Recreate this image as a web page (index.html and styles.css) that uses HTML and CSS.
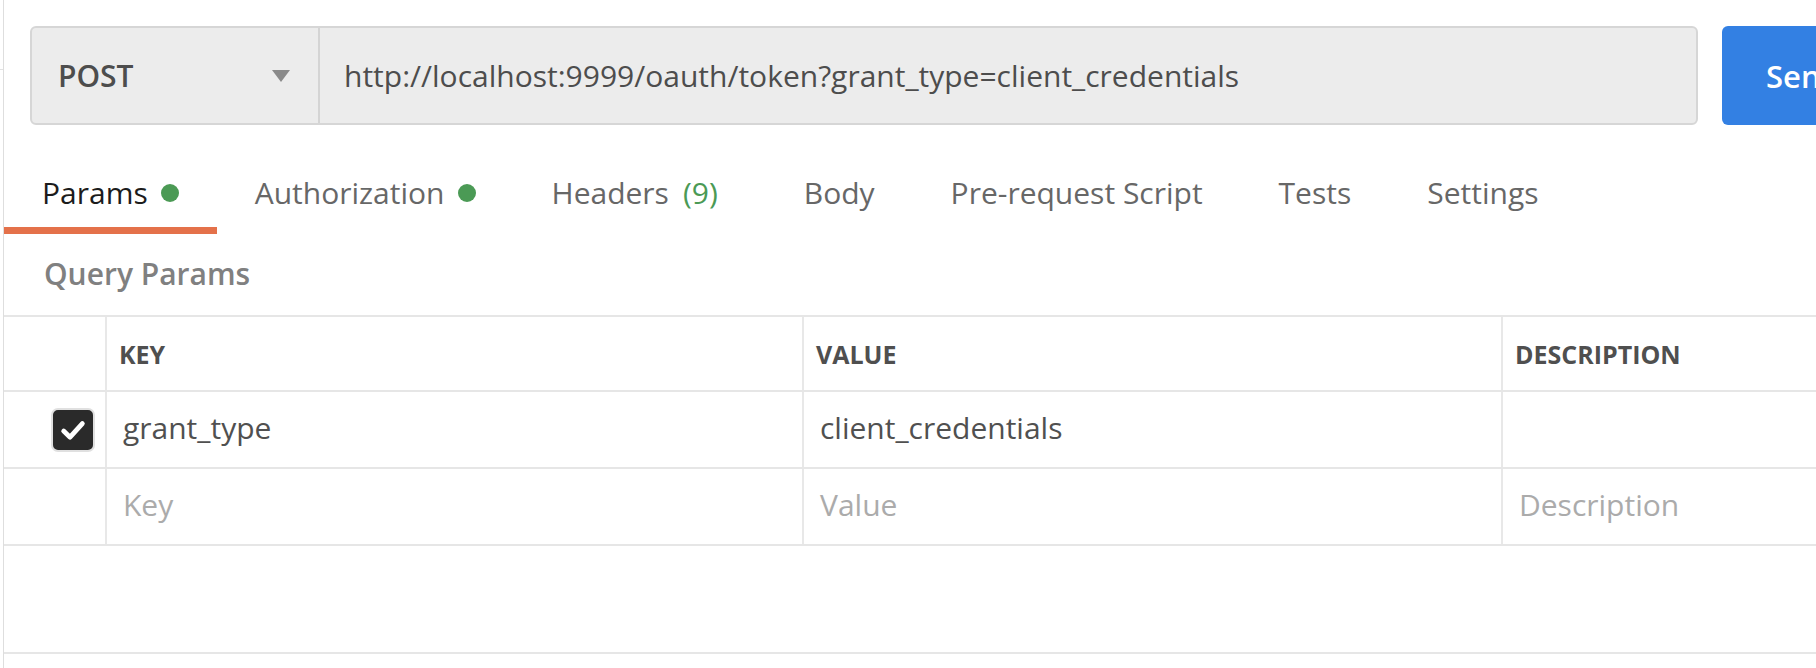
FILE: index.html
```html
<!DOCTYPE html>
<html lang="en">
<head>
<meta charset="utf-8">
<title>POST request</title>
<link rel="stylesheet" href="styles.css">
</head>
<body>
<div class="app">
  <div class="sidebar"><div class="sidebar-line"></div></div>
  <main class="main">
    <div class="request-bar">
      <div class="url-box">
        <div class="method">
          <span class="method-name">POST</span>
          <span class="caret"></span>
        </div>
        <div class="url">http://localhost:9999/oauth/token?grant_type=client_credentials</div>
      </div>
      <button class="send">Send</button>
    </div>

    <nav class="tabs">
      <div class="tab active">Params<span class="dot"></span></div>
      <div class="tab">Authorization<span class="dot"></span></div>
      <div class="tab">Headers<span class="count">(9)</span></div>
      <div class="tab">Body</div>
      <div class="tab">Pre-request Script</div>
      <div class="tab">Tests</div>
      <div class="tab">Settings</div>
    </nav>

    <div class="section-title">Query Params</div>

    <div class="table">
      <div class="row head">
        <div class="cell check-cell"></div>
        <div class="cell">KEY</div>
        <div class="cell">VALUE</div>
        <div class="cell">DESCRIPTION</div>
        <div class="cell"></div>
      </div>
      <div class="row body-row">
        <div class="cell check-cell">
          <span class="checkbox">
            <svg viewBox="0 0 24 24" width="32" height="32"><polyline points="5,12.8 9.8,17.4 19,7.2" fill="none" stroke="#ffffff" stroke-width="3.6" stroke-linecap="round" stroke-linejoin="round"/></svg>
          </span>
        </div>
        <div class="cell">grant_type</div>
        <div class="cell">client_credentials</div>
        <div class="cell"></div>
        <div class="cell"></div>
      </div>
      <div class="row body-row placeholder">
        <div class="cell check-cell"></div>
        <div class="cell">Key</div>
        <div class="cell">Value</div>
        <div class="cell">Description</div>
        <div class="cell"></div>
      </div>
      <div class="table-footer"></div>
    </div>
  </main>
</div>
</body>
</html>
```

FILE: styles.css
```css
* {
  box-sizing: border-box;
}

html, body {
  margin: 0;
  padding: 0;
  background: #ffffff;
}

body {
  width: 1816px;
  height: 668px;
  overflow: hidden;
  font-family: "Open Sans", "Liberation Sans", sans-serif;
  font-size: 30px;
  color: #505050;
}

.app {
  display: flex;
  height: 668px;
}

.sidebar {
  width: 3px;
  flex-shrink: 0;
  padding-top: 69px;
}

.sidebar-line {
  height: 1px;
  background: #e2e2e2;
}

.main {
  flex: 1;
  min-width: 0;
  border-left: 1px solid #dedede;
  overflow: hidden;
}

/* Request bar */
.request-bar {
  display: flex;
  gap: 24px;
  padding: 26px 0 0 26px;
}

.url-box {
  width: 1668px;
  height: 99px;
  flex-shrink: 0;
  display: flex;
  background: #ececec;
  border: 2px solid #d6d6d6;
  border-radius: 6px;
}

.method {
  width: 288px;
  flex-shrink: 0;
  display: flex;
  align-items: center;
  justify-content: space-between;
  padding: 0 28px 0 26px;
  border-right: 2px solid #d4d4d4;
}

.method-name {
  font-weight: 600;
  color: #4d4d4d;
}

.caret {
  width: 0;
  height: 0;
  border-left: 9.5px solid transparent;
  border-right: 9.5px solid transparent;
  border-top: 12px solid #8a8a8a;
}

.url {
  display: flex;
  align-items: center;
  padding-left: 24px;
  color: #4d4d4d;
  white-space: nowrap;
}

.send {
  flex-shrink: 0;
  height: 99px;
  padding: 0 44px;
  border: none;
  border-radius: 6px;
  background: #3380e3;
  color: #ffffff;
  font-family: "Open Sans", "Liberation Sans", sans-serif;
  font-size: 31px;
  font-weight: 600;
}

/* Tabs */
.tabs {
  display: flex;
  margin-top: 48px;
}

.tab {
  display: flex;
  align-items: center;
  line-height: 40px;
  padding: 0 38px 14px 38px;
  border-bottom: 7px solid transparent;
  color: #676767;
  white-space: nowrap;
}

.tab.active {
  color: #1c1c1c;
  border-bottom-color: #e4714a;
}

.dot {
  width: 18px;
  height: 18px;
  margin-left: 13px;
  border-radius: 50%;
  background: #4b9a55;
}

.count {
  margin-left: 14px;
  margin-right: 10px;
  color: #4b9a55;
}

.section-title {
  margin-top: 20px;
  padding-left: 40px;
  line-height: 40px;
  font-weight: 600;
  color: #808080;
}

/* Table */
.table {
  margin-top: 21px;
  border-top: 2px solid #e6e6e6;
}

.row {
  display: grid;
  grid-template-columns: 101px 697px 699px 699px 699px;
  border-bottom: 2px solid #e6e6e6;
}

.row.head {
  height: 75px;
}

.row.body-row {
  height: 77px;
}

.cell {
  display: flex;
  align-items: center;
  border-left: 2px solid #e8e8e8;
  padding-left: 16px;
  white-space: nowrap;
}

.head .cell {
  padding-left: 12px;
  font-size: 25px;
  font-weight: 700;
  color: #4f4f4f;
}

.body-row .cell {
  padding-bottom: 4px;
}

.cell.check-cell {
  border-left: none;
  padding: 0 10px 0 0;
  justify-content: flex-end;
}

.placeholder .cell {
  color: #ababab;
}

.checkbox {
  width: 44px;
  height: 44px;
  display: flex;
  align-items: center;
  justify-content: center;
  background: #2a2a2a;
  border: 2px solid #e0e0e0;
  border-radius: 7px;
}

.table-footer {
  height: 108px;
  border-bottom: 2px solid #e6e6e6;
}
```
